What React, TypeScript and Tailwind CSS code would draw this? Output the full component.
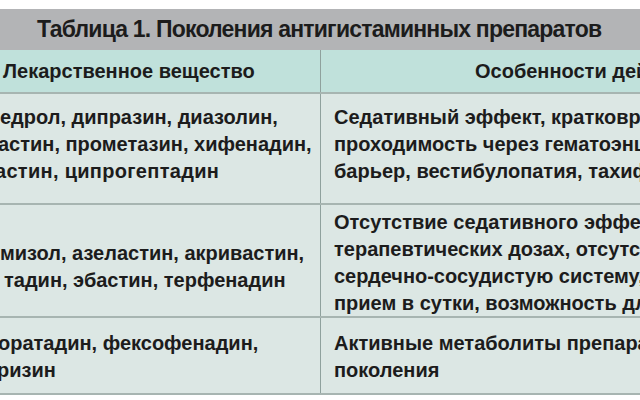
import React from "react";

const rowLine = "border-b-2 border-[#a7b5b1]";

const Line = ({ text, className = "" }: { text: string; className?: string }) => (
    <div className={`whitespace-nowrap ${className}`}>{text}</div>
);

export default function App() {
    return (
        <div
            className="w-[640px] h-[400px] overflow-hidden bg-white pt-[9px] text-[#1c1c1c] font-bold"
            style={{ fontFamily: '"Liberation Sans", Arial, sans-serif' }}
        >
            {/* Title band */}
            <div className="h-[41px] bg-[#b3b4b6] flex items-center pl-[37px] text-[23px] tracking-[-0.8px] whitespace-nowrap">
                Таблица 1. Поколения антигистаминных препаратов
            </div>

            {/* Header row */}
            <div className={`h-[44px] bg-[#c0e1db] grid grid-cols-[321px_1fr] text-[20px] ${rowLine}`}>
                <div className="flex items-center pl-[3px] border-r border-[#8fa19d] whitespace-nowrap">
                    Лекарственное вещество
                </div>
                <div className="flex items-center pl-[154px] whitespace-nowrap">Особенности действия</div>
            </div>

            <div className="bg-[#dce7e4] text-[20px] leading-[27px]">
                {/* Generation 1 */}
                <div className={`h-[111px] grid grid-cols-[321px_1fr] ${rowLine}`}>
                    <div className="border-r border-[#8fa19d] overflow-hidden pt-[10px]">
                        <Line text="едрол, дипразин, диазолин," />
                        <Line text="астин, прометазин, хифенадин," className="-ml-[2px]" />
                        <Line text="астин, ципрогептадин" className="-ml-[5px] tracking-[0.3px]" />
                    </div>
                    <div className="overflow-hidden pl-[13px] pt-[10px]">
                        <Line text="Седативный эффект, кратковременность действия," />
                        <Line text="проходимость через гематоэнцефалический" />
                        <Line text="барьер, вестибулопатия, тахифилаксия" />
                    </div>
                </div>

                {/* Generation 2 */}
                <div className={`h-[113px] grid grid-cols-[321px_1fr] ${rowLine}`}>
                    <div className="border-r border-[#8fa19d] overflow-hidden pt-[35px]">
                        <Line text="мизол, азеластин, акривастин," />
                        <Line text="тадин, эбастин, терфенадин" className="pl-[4px]" />
                    </div>
                    <div className="overflow-hidden pl-[13px] pt-[4px]">
                        <Line text="Отсутствие седативного эффекта в" />
                        <Line text="терапевтических дозах, отсутствие влияния на" />
                        <Line text="сердечно-сосудистую систему, однократный" />
                        <Line text="прием в сутки, возможность длительного" />
                    </div>
                </div>

                {/* Generation 3 */}
                <div className={`h-[77px] grid grid-cols-[321px_1fr] ${rowLine}`}>
                    <div className="border-r border-[#8fa19d] overflow-hidden pt-[12px]">
                        <Line text="оратадин, фексофенадин," className="-ml-[2px]" />
                        <Line text="ризин" className="-ml-[3px]" />
                    </div>
                    <div className="overflow-hidden pl-[13px] pt-[12px]">
                        <Line text="Активные метаболиты препаратов II" />
                        <Line text="поколения" />
                    </div>
                </div>
            </div>
        </div>
    );
}
